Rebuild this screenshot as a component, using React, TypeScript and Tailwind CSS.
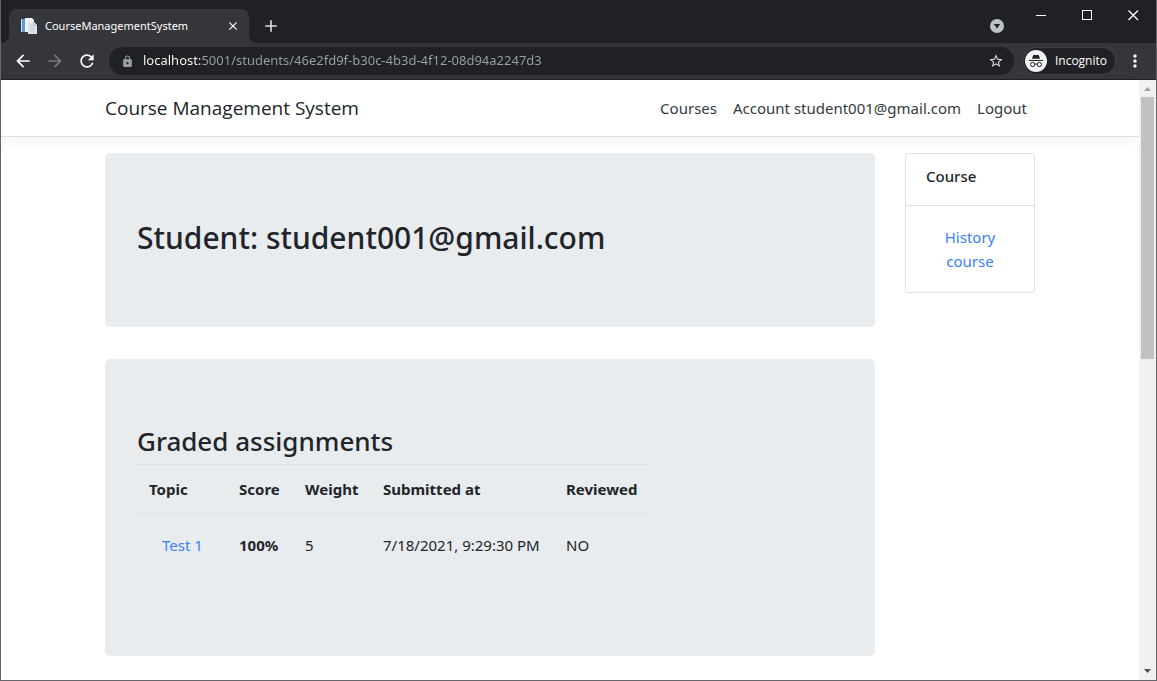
import type { ReactNode } from 'react';
import { MdAdd, MdArrowBack, MdArrowForward, MdClose, MdLock, MdMoreVert, MdRefresh, MdStarBorder } from 'react-icons/md';

const ADDRESS = 'localhost:5001/students/46e2fd9f-b30c-4b3d-4f12-08d94a2247d3';

const assignments = [
  { topic: 'Test 1', score: '100%', weight: 5, submitted: '7/18/2021, 9:29:30 PM', reviewed: 'NO' },
];

function DocumentsIcon() {
  return (
    <svg viewBox="0 0 16 16" className="size-4 shrink-0" aria-hidden="true">
      <path d="M0 1h4v13H0z" fill="#5b9bd5" />
      <path d="M0 1h1v13H0z" fill="#cfe2f3" />
      <path d="M4 0h7l2 2v12H4z" fill="#eef1f5" />
      <path d="M4 0h1v14H4z" fill="#ffffff" />
      <path d="M7 4h6l3 3v9H7z" fill="#dfe4ea" />
      <path d="M9 8h4M9 10.500h5M9 13h5" stroke="#c2c9d2" />
      <path d="M12.500 4v3.500H16" fill="none" stroke="#b4bcc6" />
    </svg>
  );
}

function TabSearchIcon() {
  return (
    <svg viewBox="0 0 14 14" className="size-[14px]" aria-hidden="true">
      <circle cx="7" cy="7" r="7" fill="#bdc1c6" />
      <path d="M3.8 5h6.4L7 9.4z" fill="#202124" />
    </svg>
  );
}

function IncognitoIcon() {
  return (
    <svg viewBox="0 0 22 22" className="size-[22px] shrink-0" aria-hidden="true">
      <circle cx="11" cy="11" r="11" fill="#f1f3f4" />
      <path d="M7 8.700l1.200-3.400c.2-.6.8-.8 1.300-.6L11 5.200l1.500-.5c.5-.2 1.100 0 1.300.6L15 8.700z" fill="#202124" />
      <path d="M4 10.500h14" stroke="#202124" strokeWidth="1" />
      <circle cx="7.600" cy="14.500" r="2.100" fill="none" stroke="#202124" strokeWidth="1" />
      <circle cx="14.400" cy="14.500" r="2.100" fill="none" stroke="#202124" strokeWidth="1" />
      <path d="M9.700 14.300q1.300-.8 2.600 0" fill="none" stroke="#202124" strokeWidth="1" />
    </svg>
  );
}

function WindowButton({ label, children }: { label: string; children: ReactNode }) {
  return (
    <button type="button" aria-label={label} className="flex h-[30px] w-[46px] items-center justify-center text-white">
      <svg viewBox="0 0 11 11" className="size-[11px]" fill="none" stroke="currentColor" shapeRendering="crispEdges">
        {children}
      </svg>
    </button>
  );
}

function TabStrip() {
  return (
    <div className="flex h-[43px] bg-[#202124]">
      <div className="flex items-end">
        <span className="size-2 bg-[radial-gradient(circle_at_top_left,#202124_8px,#35363a_8px)]" />
        <div className="flex h-[34px] w-60 items-center gap-2 rounded-t-lg bg-[#35363a] pr-[9px] pl-3 text-white">
          <DocumentsIcon />
          <span className="grow whitespace-nowrap text-[11px]">CourseManagementSystem</span>
          <button type="button" aria-label="Close tab">
            <MdClose className="size-[14px]" />
          </button>
        </div>
        <span className="size-2 bg-[radial-gradient(circle_at_top_right,#202124_8px,#35363a_8px)]" />
      </div>
      <button type="button" aria-label="New tab" className="mt-4 ml-1 size-5 text-[#dadce0]">
        <MdAdd className="size-5" />
      </button>
      <div className="grow" />
      <button type="button" aria-label="Search tabs" className="mt-[19px] mr-[14px] size-[14px]">
        <TabSearchIcon />
      </button>
      <div className="flex">
        <WindowButton label="Minimize">
          <path d="M0 5.5h10" />
        </WindowButton>
        <WindowButton label="Maximize">
          <path d="M.5.5h9v9H.5z" />
        </WindowButton>
        <WindowButton label="Close">
          <path d="M.5.5l9.500 9.500M10 .5L.5 10" shapeRendering="auto" strokeWidth="1.3" />
        </WindowButton>
      </div>
    </div>
  );
}

function Toolbar() {
  return (
    <div className="flex h-[37px] items-center border-b border-[#202124] bg-[#35363a] text-white">
      <div className="flex gap-3 pr-3 pl-3">
        <button type="button" aria-label="Back">
          <MdArrowBack className="size-5" />
        </button>
        <button type="button" aria-label="Forward" className="text-[#77787b]">
          <MdArrowForward className="size-5" />
        </button>
        <button type="button" aria-label="Reload">
          <MdRefresh className="size-5" />
        </button>
      </div>
      <div className="flex h-7 grow items-center rounded-full bg-[#202124] pr-[10px] pl-3">
        <MdLock className="size-[13px] shrink-0 text-[#9aa0a6]" />
        <input
          aria-label="Address"
          defaultValue={ADDRESS}
          spellCheck={false}
          className="ml-[9px] grow bg-[linear-gradient(to_right,#ffffff_57px,#9aa0a6_57px)] bg-clip-text text-[13px] text-transparent outline-none"
        />
        <button type="button" aria-label="Bookmark this page" className="text-[#dadce0]">
          <MdStarBorder className="size-4" />
        </button>
      </div>
      <button type="button" className="ml-[10px] flex h-[26px] items-center gap-2 rounded-full bg-[#202124] pr-2 pl-px font-['Open_Sans','Noto_Sans',sans-serif] text-xs ring-1 ring-[#3f4044]">
        <IncognitoIcon />
        Incognito
      </button>
      <button type="button" aria-label="Menu" className="mr-[11px] ml-[10px]">
        <MdMoreVert className="size-5" />
      </button>
    </div>
  );
}

function Scrollbar() {
  return (
    <div className="flex w-[17px] shrink-0 flex-col items-center bg-[#f1f1f1]" aria-hidden="true">
      <svg viewBox="0 0 17 17" className="size-[17px] shrink-0">
        <path d="M5 11h7L8.500 7z" fill="#a3a3a3" />
      </svg>
      <div className="w-full grow px-[2px]">
        <div className="h-[262px] bg-[#c1c1c1]" />
      </div>
      <svg viewBox="0 0 17 17" className="size-[17px] shrink-0">
        <path d="M5 6h7l-3.500 4z" fill="#505050" />
      </svg>
    </div>
  );
}

export default function App() {
  const heading = 'font-medium text-[#212529]';
  return (
    <div className="flex min-h-screen flex-col border border-t-0 border-[#66676a] bg-white font-['Noto_Sans','Open_Sans',sans-serif]">
      <TabStrip />
      <Toolbar />
      <div className="flex grow">
        <div className="min-w-0 grow text-[15px] leading-6 text-[#212529]">
          <header className="border-b border-[#dee2e6] shadow-[0_4px_12px_rgba(0,0,0,0.05)]">
            <div className="mx-auto flex h-14 max-w-[960px] items-center justify-between pr-[23px] pl-[15px]">
              <a href="#" className="font-['Open_Sans','Noto_Sans',sans-serif] text-[19px]">Course Management System</a>
              <nav className="flex gap-4 text-[#343a40]">
                <a href="#">Courses</a>
                <a href="#">Account student001@gmail.com</a>
                <a href="#">Logout</a>
              </nav>
            </div>
          </header>
          <div className="mx-auto mt-4 flex max-w-[960px] items-start gap-[30px] px-[15px]">
            <main className="flex min-w-0 grow flex-col gap-8">
              <section className="rounded-[5px] bg-[#e9ecef] px-8 py-16">
                <h1 className={`mb-1 text-[30px] leading-[42px] ${heading}`}>Student: student001@gmail.com</h1>
              </section>
              <section className="rounded-[5px] bg-[#e9ecef] px-8 pt-16 pb-20">
                <h2 className={`mb-1 text-[26px] leading-[37px] ${heading}`}>Graded assignments</h2>
                <table className="w-[513px] table-fixed text-left">
                  <colgroup>
                    <col className="w-[90px]" />
                    <col className="w-[66px]" />
                    <col className="w-[78px]" />
                    <col className="w-[183px]" />
                    <col className="w-[96px]" />
                  </colgroup>
                  <thead>
                    <tr className="h-[49px] border-y border-[#dee2e6]">
                      {['Topic', 'Score', 'Weight', 'Submitted at', 'Reviewed'].map((name) => (
                        <th key={name} className="pl-3 font-bold whitespace-nowrap">{name}</th>
                      ))}
                    </tr>
                  </thead>
                  <tbody>
                    {assignments.map((row) => (
                      <tr key={row.topic} className="h-[62px] whitespace-nowrap">
                        <td className="pl-[25px]"><a href="#" className="text-[#3b7dff]">{row.topic}</a></td>
                        <td className="pl-3 font-bold">{row.score}</td>
                        <td className="pl-3">{row.weight}</td>
                        <td className="pl-3">{row.submitted}</td>
                        <td className="pl-3">{row.reviewed}</td>
                      </tr>
                    ))}
                  </tbody>
                </table>
              </section>
            </main>
            <aside className="w-[130px] shrink-0 rounded border border-[#dfdfdf]">
              <h2 className="h-[52px] border-b border-[#dfdfdf] px-5 pt-[10px] font-medium">Course</h2>
              <a href="#" className="block px-8 py-[19px] text-center text-[#3b7dff]">History course</a>
            </aside>
          </div>
        </div>
        <Scrollbar />
      </div>
    </div>
  );
}
